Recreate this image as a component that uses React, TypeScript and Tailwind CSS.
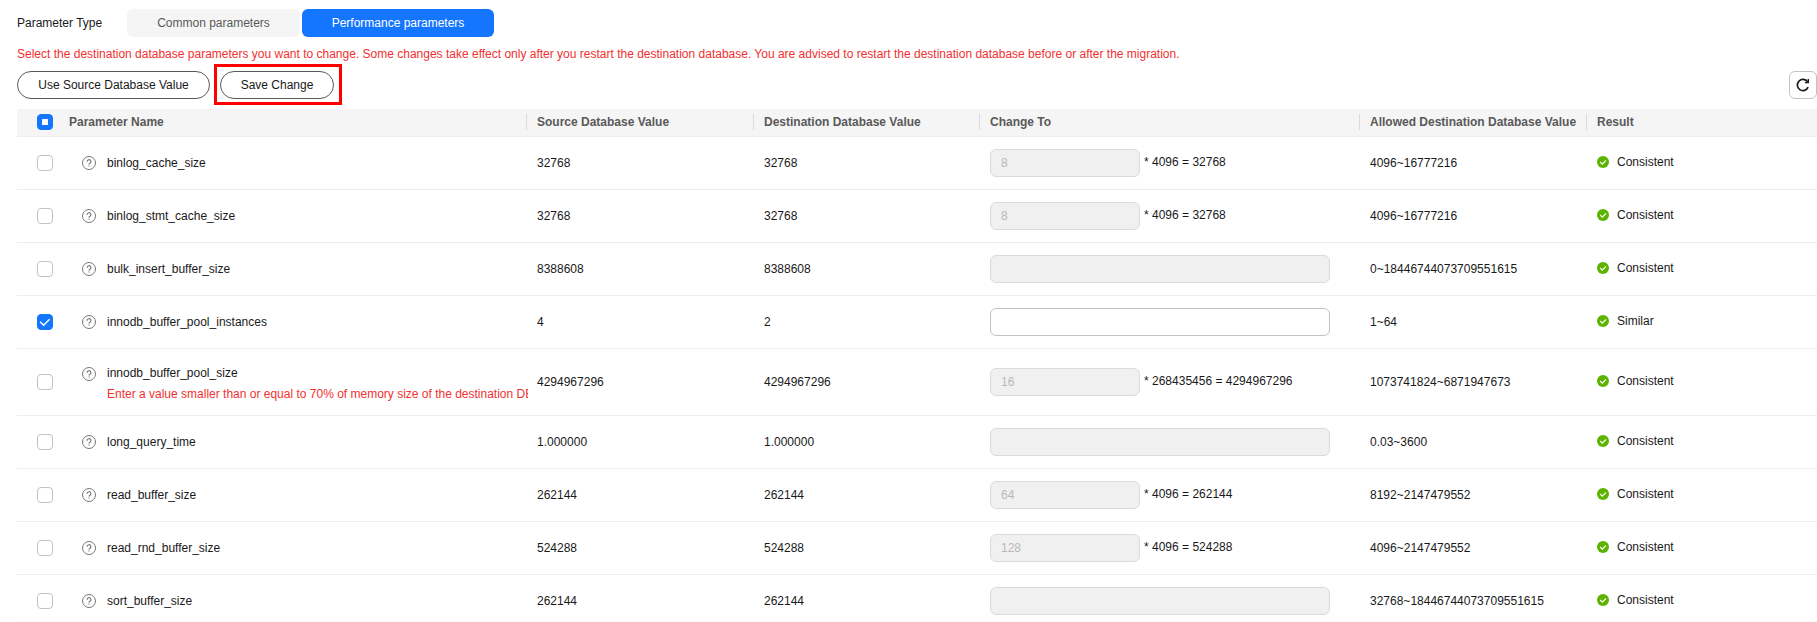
import * as React from "react";
import { clsx } from "clsx";

type Param = {
  name: string;
  source: string;
  destination: string;
  allowed: string;
  result: "Consistent" | "Similar";
  value?: string;
  formula?: string;
  warning?: string;
  editable?: boolean;
};

const PARAMS: Param[] = [
  { name: "binlog_cache_size", source: "32768", destination: "32768", value: "8", formula: "4096 = 32768", allowed: "4096~16777216", result: "Consistent" },
  { name: "binlog_stmt_cache_size", source: "32768", destination: "32768", value: "8", formula: "4096 = 32768", allowed: "4096~16777216", result: "Consistent" },
  { name: "bulk_insert_buffer_size", source: "8388608", destination: "8388608", allowed: "0~18446744073709551615", result: "Consistent" },
  { name: "innodb_buffer_pool_instances", source: "4", destination: "2", allowed: "1~64", result: "Similar", editable: true },
  {
    name: "innodb_buffer_pool_size",
    source: "4294967296",
    destination: "4294967296",
    value: "16",
    formula: "268435456 = 4294967296",
    allowed: "1073741824~6871947673",
    result: "Consistent",
    warning: "Enter a value smaller than or equal to 70% of memory size of the destination DB",
  },
  { name: "long_query_time", source: "1.000000", destination: "1.000000", allowed: "0.03~3600", result: "Consistent" },
  { name: "read_buffer_size", source: "262144", destination: "262144", value: "64", formula: "4096 = 262144", allowed: "8192~2147479552", result: "Consistent" },
  { name: "read_rnd_buffer_size", source: "524288", destination: "524288", value: "128", formula: "4096 = 524288", allowed: "4096~2147479552", result: "Consistent" },
  { name: "sort_buffer_size", source: "262144", destination: "262144", allowed: "32768~18446744073709551615", result: "Consistent" },
];

const COLUMNS = ["Source Database Value", "Destination Database Value", "Change To", "Allowed Destination Database Value", "Result"];

function HelpIcon(): React.JSX.Element {
  return (
    <svg viewBox="0 0 14 14" className="h-3.5 w-3.5 shrink-0" fill="none" stroke="#777777" aria-hidden="true">
      <circle cx="7" cy="7" r="6.5" />
      <path d="M5.1 5.7a1.9 1.9 0 1 1 2.9 1.5c-.7.4-1 .7-1 1.4" strokeWidth="1.2" />
      <path d="M7 9.4v1.2" strokeWidth="1.2" />
    </svg>
  );
}

function OkIcon(): React.JSX.Element {
  return (
    <svg viewBox="0 0 12 12" className="h-3 w-3 shrink-0" aria-hidden="true">
      <circle cx="6" cy="6" r="6" fill="#5cb300" />
      <path d="M3.2 6l2.1 2.1 3.6-3.6" fill="none" stroke="#fff" strokeWidth="1.1" />
    </svg>
  );
}

function RefreshIcon(): React.JSX.Element {
  return (
    <svg viewBox="0 0 16 16" className="h-4 w-4 shrink-0" fill="none" stroke="#191919" strokeWidth="1.7" aria-hidden="true">
      <path d="M13.1 10.2A5.6 5.6 0 1 1 12.6 4.9" />
      <path d="M13.3 2v3.6H9.9" strokeWidth="1.4" />
    </svg>
  );
}

type TickBoxProps = {
  label: string;
  checked: boolean;
  partial?: boolean;
  onChange: () => void;
};

function TickBox({ label, checked, partial = false, onChange }: TickBoxProps): React.JSX.Element {
  const filled = checked || partial;
  return (
    <span className="relative ml-5 block h-4 w-4">
      <input
        type="checkbox"
        aria-label={label}
        checked={checked}
        onChange={onChange}
        ref={(el) => { if (el) el.indeterminate = partial; }}
        className={clsx(
          "block h-4 w-4 appearance-none rounded border",
          filled ? "border-[#1476ff] bg-[#1476ff]" : "border-[#c2c2c2] bg-white",
        )}
      />
      {filled && (
        <svg viewBox="0 0 16 16" className="pointer-events-none absolute inset-0 h-4 w-4" aria-hidden="true">
          {partial
            ? <rect x="5" y="5" width="6" height="6" rx="0.5" fill="#fff" />
            : <path d="M3.2 7.8l3.4 3.4 6-6" fill="none" stroke="#fff" strokeWidth="1.4" />}
        </svg>
      )}
    </span>
  );
}

export default function App(): React.JSX.Element {
  const [selected, setSelected] = React.useState<string[]>(["innodb_buffer_pool_instances"]);
  const [values, setValues] = React.useState<Record<string, string>>({});

  const allSelected = selected.length === PARAMS.length;

  function toggle(name: string): void {
    setSelected((prev) => (prev.includes(name) ? prev.filter((n) => n !== name) : [...prev, name]));
  }

  return (
    <div className="bg-white pt-[9px] pl-[17px] font-['Liberation_Sans',Arial,sans-serif] text-xs text-[#191919]">
      {/* Parameter type switch */}
      <div className="flex items-center">
        <span className="w-[110px]">Parameter Type</span>
        <div className="flex gap-0.5">
          <button type="button" className="h-7 w-[173px] rounded-md bg-[#f5f5f5] text-[#595959]">
            Common parameters
          </button>
          <button type="button" className="h-7 w-48 rounded-md bg-[#1476ff] text-white">
            Performance parameters
          </button>
        </div>
      </div>

      <p className="mt-[9px] text-[#f23030]">
        Select the destination database parameters you want to change. Some changes take effect only after you restart the
        destination database. You are advised to restart the destination database before or after the migration.
      </p>

      {/* Actions */}
      <div className="mt-[9px] flex items-center gap-2.5">
        <button type="button" className="h-7 w-[193px] rounded-full border border-[#595959]">
          Use Source Database Value
        </button>
        <div className="relative">
          <button type="button" className="h-7 w-[114px] rounded-full border border-[#595959]">
            Save Change
          </button>
          <span className="pointer-events-none absolute -top-[7px] -right-2 -bottom-1.5 -left-1.5 border-3 border-[#ff0000]" />
        </div>
        <button
          type="button"
          aria-label="Refresh"
          className="ml-auto flex h-7 w-7 items-center justify-center rounded-md border border-[#c2c2c2]"
        >
          <RefreshIcon />
        </button>
      </div>

      <table className="mt-2.5 w-full table-fixed border-separate border-spacing-0 text-left">
        <colgroup>
          <col className="w-[40px]" />
          <col className="w-[469px]" />
          <col className="w-[227px]" />
          <col className="w-[226px]" />
          <col className="w-[380px]" />
          <col className="w-[227px]" />
          <col className="w-[231px]" />
        </colgroup>
        <thead>
          <tr className="h-7 bg-[#f5f5f5] text-[#595959] *:border-b *:border-[#ededed] *:p-0 *:pb-0.5">
            <th>
              <TickBox
                label="Select all parameters"
                checked={allSelected}
                partial={selected.length > 0 && !allSelected}
                onChange={() => setSelected(allSelected ? [] : PARAMS.map((p) => p.name))}
              />
            </th>
            <th><div className="pl-3">Parameter Name</div></th>
            {COLUMNS.map((column) => (
              <th key={column} className="whitespace-nowrap">
                <div className="border-l border-[#dbdbdb] pl-2.5">{column}</div>
              </th>
            ))}
          </tr>
        </thead>
        <tbody>
          {PARAMS.map((param) => (
            <tr
              key={param.name}
              className="*:border-b *:border-[#ededed] *:p-0 *:pt-3 *:pb-3 last:*:border-[#fafafa] last:*:pb-1.5"
            >
              <td>
                <TickBox
                  label={`Select ${param.name}`}
                  checked={selected.includes(param.name)}
                  onChange={() => toggle(param.name)}
                />
              </td>
              <td>
                <div
                  className={clsx(
                    "-mr-0.5 flex items-start gap-[11px] overflow-hidden pl-[25px]",
                    param.warning && "-mb-0.5 pt-0.5",
                  )}
                >
                  <span className="flex h-[21px] items-center">
                    <HelpIcon />
                  </span>
                  <div className="leading-[21px] whitespace-nowrap">
                    <div>{param.name}</div>
                    {param.warning && <div className="text-[#f23030]">{param.warning}</div>}
                  </div>
                </div>
              </td>
              <td><div className="pl-[11px]">{param.source}</div></td>
              <td><div className="pl-[11px]">{param.destination}</div></td>
              <td>
                <div className="flex items-center gap-1 pl-[11px]">
                  <input
                    type="text"
                    aria-label={`Change ${param.name} to`}
                    disabled={!param.editable}
                    value={values[param.name] ?? param.value ?? ""}
                    onChange={(e) => setValues({ ...values, [param.name]: e.target.value })}
                    className={clsx(
                      "h-7 rounded-md border border-[#c2c2c2] px-2.5 disabled:border-[#dbdbdb] disabled:bg-[#f0f0f0] disabled:text-[#b8b8b8]",
                      param.formula ? "w-[150px]" : "w-[340px]",
                    )}
                  />
                  {param.formula && <span className="pb-0.5">* {param.formula}</span>}
                </div>
              </td>
              <td><div className="pl-[11px] whitespace-nowrap">{param.allowed}</div></td>
              <td>
                <div className="flex items-center gap-2 pb-0.5 pl-[11px]">
                  <OkIcon />
                  {param.result}
                </div>
              </td>
            </tr>
          ))}
        </tbody>
      </table>
    </div>
  );
}
